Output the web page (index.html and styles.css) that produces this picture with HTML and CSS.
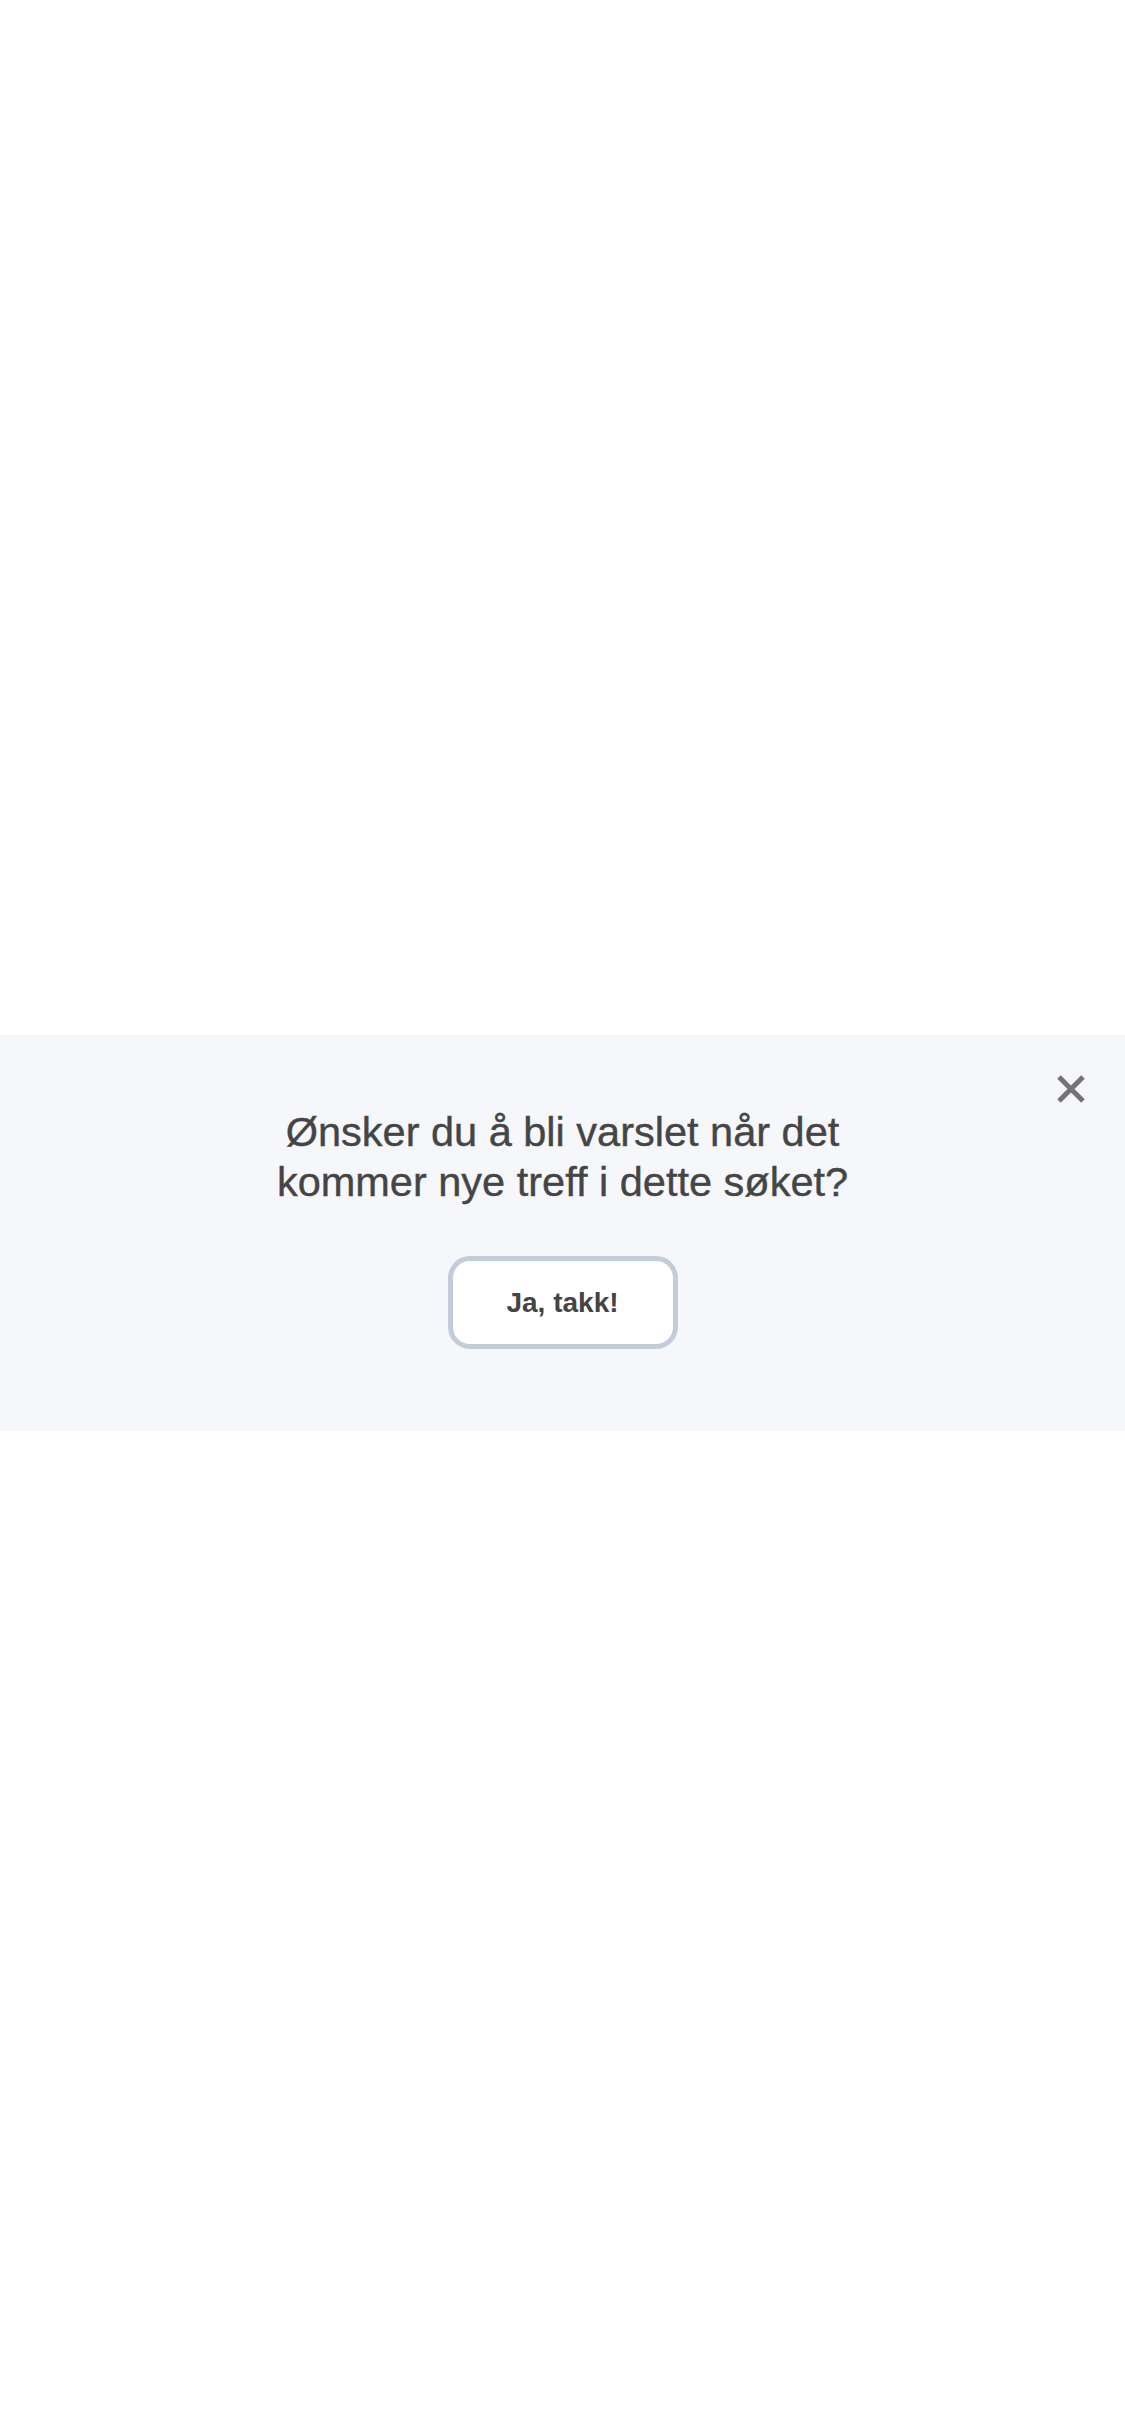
FILE: index.html
```html
<!DOCTYPE html>
<html lang="nb">
<head>
<meta charset="utf-8">
<title>Varsling</title>
<link rel="stylesheet" href="styles.css">
</head>
<body>
<main class="page">
  <section class="prompt">
    <button class="close" aria-label="Lukk">
      <svg viewBox="0 0 30 30" width="30" height="30" aria-hidden="true">
        <path d="M3 3 L27 27 M27 3 L3 27" stroke="#747474" stroke-width="5" stroke-linecap="butt" fill="none"/>
      </svg>
    </button>
    <h2 class="title">Ønsker du å bli varslet når det<br>kommer nye treff i dette søket?</h2>
    <button class="yes">Ja, takk!</button>
  </section>
</main>
</body>
</html>
```

FILE: styles.css
```css
html, body {
  margin: 0;
  padding: 0;
  background: #ffffff;
}

.page {
  min-height: 2436px;
  display: flex;
  flex-direction: column;
  padding-top: 1035px;
  box-sizing: border-box;
  font-family: "Liberation Sans", Arial, sans-serif;
}

.prompt {
  position: relative;
  background: #f6f7fb;
  height: 396px;
  box-sizing: border-box;
  padding-top: 72px;
  display: flex;
  flex-direction: column;
  align-items: center;
}

.close {
  position: absolute;
  top: 39px;
  right: 39px;
  width: 30px;
  height: 30px;
  padding: 0;
  border: 0;
  background: transparent;
  display: block;
}

.close svg {
  display: block;
}

.title {
  margin: 0;
  font-size: 41.5px;
  line-height: 50px;
  font-weight: 400;
  color: #454545;
  text-align: center;
  -webkit-text-stroke: 0.4px #454545;
}

.yes {
  margin-top: 49px;
  width: 230px;
  height: 93px;
  box-sizing: border-box;
  border: 5px solid #c3cdda;
  border-radius: 22px;
  background: #ffffff;
  font-family: "Liberation Sans", Arial, sans-serif;
  font-size: 28px;
  font-weight: 700;
  color: #444444;
  padding: 0;
}
```
